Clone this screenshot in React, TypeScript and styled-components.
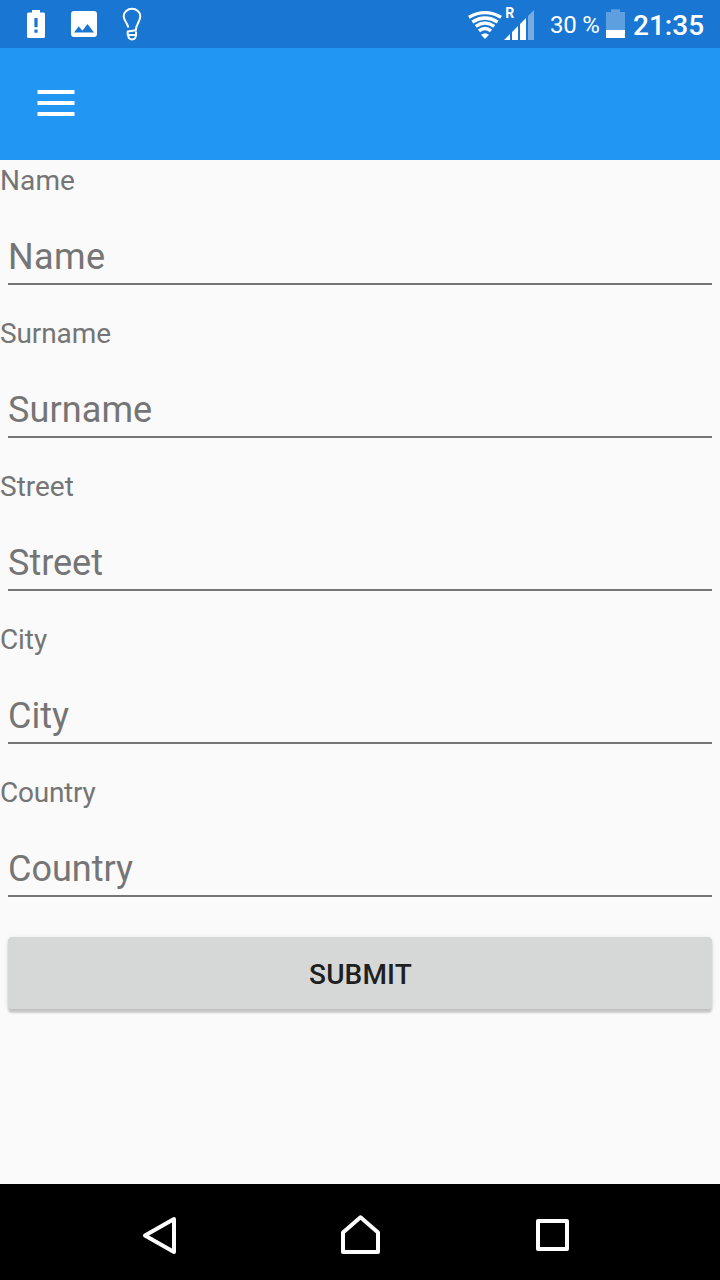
import React from 'react';
import styled, { createGlobalStyle } from 'styled-components';

const GlobalStyle = createGlobalStyle`
  *, *::before, *::after { box-sizing: border-box; }
  body {
    margin: 0;
    background: #fafafa;
    font-family: Roboto, "Liberation Sans", sans-serif;
  }
`;

const Screen = styled.div`
  display: flex;
  flex-direction: column;
  width: 720px;
  height: 1280px;
  background: #fafafa;
  overflow: hidden;
`;

const StatusBar = styled.header`
  display: flex;
  justify-content: space-between;
  flex: none;
  height: 48px;
  padding: 0 16px 0 24px;
  background: #1976d2;
  color: #fff;
`;

const Notifications = styled.div`
  display: flex;
  gap: 24px;
`;

const SystemStatus = styled.div`
  display: flex;
`;

const StatusIcon = styled.svg`
  display: block;
  flex: none;
  height: 48px;
  fill: #fff;
  overflow: visible;
`;

const SignalMark = styled.text`
  font: 700 14px Roboto, sans-serif;
`;

const BatteryPercent = styled.span`
  margin-left: 14px;
  width: 56px;
  font-size: 24px;
  letter-spacing: -0.25px;
  line-height: 50px;
  white-space: nowrap;
`;

const Clock = styled.span`
  margin-left: 8px;
  width: 71px;
  font-size: 28px;
  font-weight: 500;
  line-height: 51px;
  white-space: nowrap;
`;

const AppBar = styled.div`
  display: flex;
  align-items: center;
  flex: none;
  height: 112px;
  padding: 0 37px;
  background: #2196f3;
`;

const MenuButton = styled.button`
  display: flex;
  flex-direction: column;
  align-items: center;
  gap: 7px;
  width: 38px;
  margin: 0 0 2px;
  padding: 0;
  border: 0;
  background: none;
`;

const MenuLine = styled.span`
  width: 38px;
  height: 4px;
  border: solid rgba(255, 255, 255, 0.5);
  border-width: 0 1px;
  background: #fff;
  background-clip: padding-box;
`;

const Form = styled.form`
  display: flex;
  flex-direction: column;
  flex: 1;
`;

const Field = styled.label`
  display: flex;
  flex-direction: column;
  height: 153px;
  padding-top: 4px;
`;

const FieldLabel = styled.span<{ $tracking: number }>`
  color: #757575;
  font-size: 28px;
  letter-spacing: ${({ $tracking }) => $tracking}px;
  line-height: 33px;
`;

const FieldInput = styled.input<{ $tracking: number }>`
  height: 49px;
  margin: 39px 8px 0;
  padding: 0 0 5px;
  border: 0;
  border-bottom: 2px solid #757575;
  border-radius: 0;
  outline: 0;
  background: transparent;
  color: #212121;
  font: 400 36px/42px Roboto, sans-serif;
  letter-spacing: ${({ $tracking }) => $tracking}px;

  &::placeholder {
    color: #757575;
    opacity: 1;
  }
`;

const SubmitButton = styled.button`
  height: 72px;
  margin: 12px 8px 0;
  padding: 2px 0 0 1px;
  border: 0;
  border-radius: 4px;
  background: #d6d7d7;
  box-shadow: 0 4px 2px rgba(0, 0, 0, 0.17), 0 1px 5px rgba(0, 0, 0, 0.12);
  color: #1e1f1f;
  font: 500 28px/33px Roboto, sans-serif;
  letter-spacing: 0.15px;
`;

const NavigationBar = styled.nav`
  display: flex;
  align-items: center;
  justify-content: center;
  gap: 96px;
  flex: none;
  height: 96px;
  background: #000;
`;

const NavButton = styled.button`
  display: flex;
  width: 100px;
  height: 96px;
  padding: 0;
  border: 0;
  background: none;
`;

const NavIcon = styled.svg`
  fill: none;
  stroke: #fff;
  stroke-width: 4;
  stroke-linejoin: round;
`;

const fields = [
  { name: 'Name', labelTracking: 0.1, inputTracking: 0.35 },
  { name: 'Surname', labelTracking: -0.1, inputTracking: 0.1 },
  { name: 'Street', labelTracking: 0, inputTracking: 0 },
  { name: 'City', labelTracking: -0.1, inputTracking: 0 },
  { name: 'Country', labelTracking: -0.25, inputTracking: 0 },
];

const navItems = [
  { label: 'Back', path: 'M60 35 L31 51.5 L60 68 Z' },
  { label: 'Home', path: 'M33 68 V48.5 L50.5 33.3 L68 48.5 V68 Z' },
  { label: 'Recent apps', path: 'M32 37 H61 V65 H32 Z' },
];

function NotificationIcons() {
  return (
    <Notifications>
      <StatusIcon width="24" viewBox="24 0 24 48">
        <path
          fillRule="evenodd"
          d="M32 10H40V12.5H43.5Q45 12.5 45 14V36.5Q45 38 43.5 38H28.5Q27 38 27 36.5V14Q27 12.5 28.5 12.5H32ZM34.4 18V27.3H37.6V18ZM34.4 29.5V32.7H37.6V29.5Z"
        />
      </StatusIcon>
      <StatusIcon width="26" viewBox="72 0 26 48">
        <path
          fillRule="evenodd"
          d="M74 11H94Q97 11 97 14V34Q97 37 94 37H74Q71 37 71 34V14Q71 11 74 11ZM74 32.5H94L87.5 24L82.3 30.7L78.7 26.3Z"
        />
      </StatusIcon>
      <StatusIcon width="24" viewBox="122 0 24 48">
        <path
          d="M128.2 27.5C127.8 23 123.7 20.5 123.7 16.2C123.7 12 127.5 8.8 132 8.8S140.3 12 140.3 16.2C140.3 21.5 135.9 24 135.8 30.2L127.7 31.6V35H136V31.5M128.2 35.2C128.5 40.8 135.6 40.8 136 35.2"
          fill="none"
          stroke="#fff"
          strokeWidth="2"
          strokeLinejoin="round"
        />
      </StatusIcon>
    </Notifications>
  );
}

function SystemIcons() {
  return (
    <SystemStatus>
      <StatusIcon width="68" viewBox="468 0 68 48">
        <g fill="none" stroke="#fff" strokeWidth="3.4">
          <path d="M468.9 17.3Q485 8 501.1 17.3" />
          <path d="M472.3 22Q485 14 497.7 22" />
          <path d="M475.8 26.4Q485 19.8 494.2 26.4" />
          <path d="M479 30.8Q485 26 491 30.8" />
        </g>
        <path d="M481 34.8Q485 31.8 489 34.8L485 39Z" />
        <SignalMark x="505.2" y="18">R</SignalMark>
        <path d="M504 40L510 34V40ZM512 32L518 26V40H512ZM520 24L526 18V40H520Z" />
        <path d="M528 16L534 10V40H528Z" opacity=".4" />
      </StatusIcon>
      <BatteryPercent>30 %</BatteryPercent>
      <StatusIcon width="19" viewBox="606 0 19 48">
        <path d="M611 9.3H620V12H625V30H606V12H611Z" opacity=".3" />
        <path d="M606 30H625V38H606Z" />
      </StatusIcon>
      <Clock>21:35</Clock>
    </SystemStatus>
  );
}

export default function App() {
  return (
    <>
      <GlobalStyle />
      <Screen>
        <StatusBar>
          <NotificationIcons />
          <SystemIcons />
        </StatusBar>
        <AppBar>
          <MenuButton aria-label="Menu">
            <MenuLine />
            <MenuLine />
            <MenuLine />
          </MenuButton>
        </AppBar>
        <Form onSubmit={(event) => event.preventDefault()}>
          {fields.map(({ name, labelTracking, inputTracking }) => (
            <Field key={name}>
              <FieldLabel $tracking={labelTracking}>{name}</FieldLabel>
              <FieldInput $tracking={inputTracking} placeholder={name} />
            </Field>
          ))}
          <SubmitButton type="submit">SUBMIT</SubmitButton>
        </Form>
        <NavigationBar>
          {navItems.map(({ label, path }) => (
            <NavButton key={label} aria-label={label}>
              <NavIcon width="100" height="96" viewBox="0 0 100 96">
                <path d={path} />
              </NavIcon>
            </NavButton>
          ))}
        </NavigationBar>
      </Screen>
    </>
  );
}
